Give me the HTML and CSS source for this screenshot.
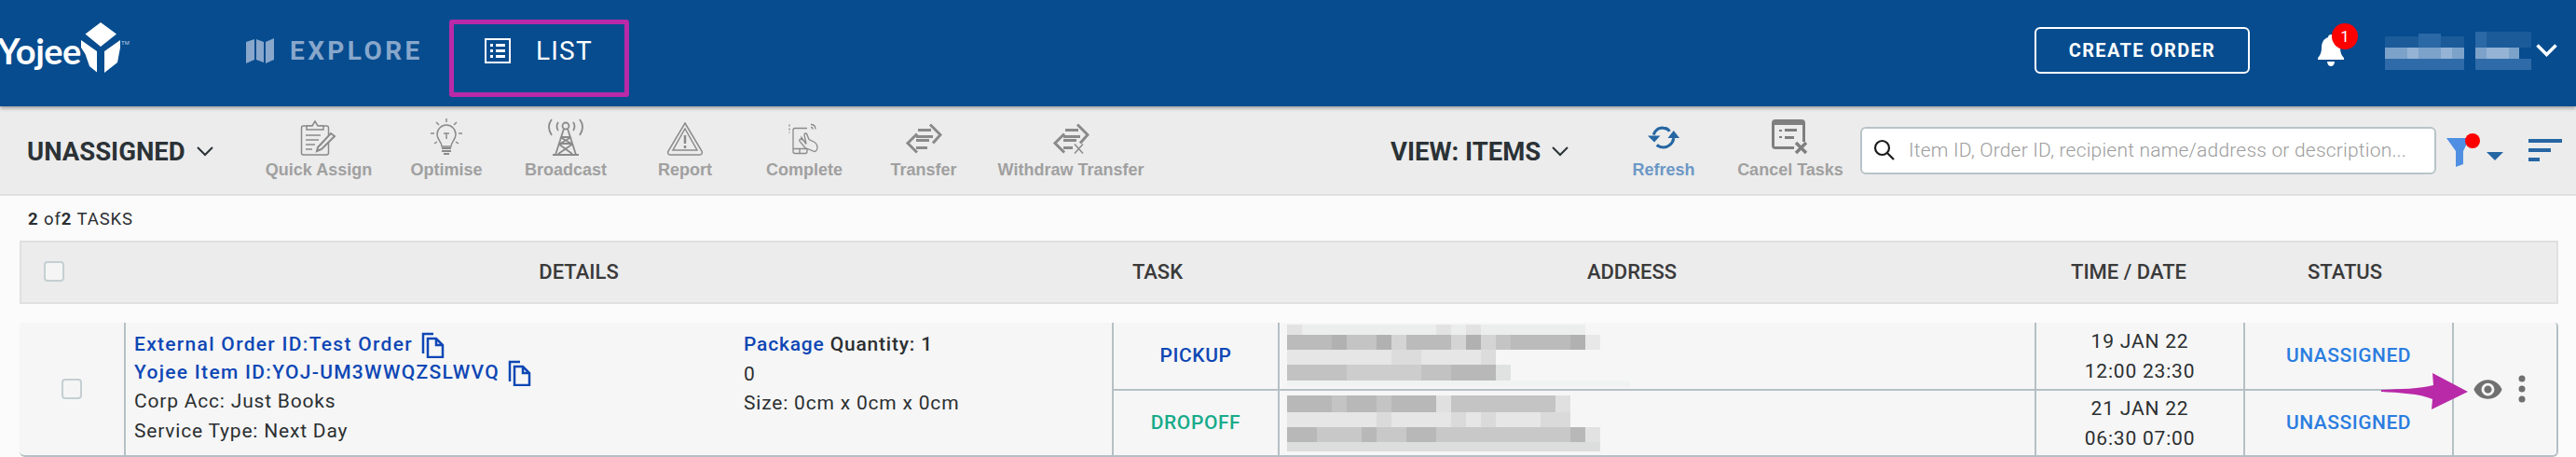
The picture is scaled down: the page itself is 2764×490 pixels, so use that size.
FILE: index.html
```html
<!DOCTYPE html>
<html lang="en">
  <head>
    <meta charset="UTF-8" />
    <meta name="viewport" content="width=device-width, initial-scale=1.0" />
    <title>Yojee - Task List</title>
    <link rel="stylesheet" href="styles.css">
  </head>
  <body>
    <header class="topbar">
      <div class="brand">
        <span class="brand-name">Yojee</span>
        <svg class="brand-mark" width="46" height="56" viewBox="0 0 46 56">
          <path fill="#fff" d="M21 0l17 12.500-17 13.500-16.500-13.500z" />
          <path fill="#fff" d="M0 19l17 12v22.500l-8-6.500-4.500-13L0 27z" />
          <path fill="#fff" d="M42 19L25 31v23l14-11 3-16z" />
          <text x="43" y="24" class="brand-tm">TM</text>
        </svg>
      </div>
      <nav class="main-nav">
        <a class="nav-link nav-link-muted">
          <svg width="30" height="27" viewBox="0 0 30 27">
            <path fill="#88a7cb" d="M0 4l9-3v22l-9 4zM11 1l8 3v22l-8-3zM21 4l9-4v23l-9 4z" />
          </svg>
          EXPLORE
        </a>
        <a class="nav-link nav-link-active">
          <svg width="28" height="27" viewBox="0 0 28 27">
            <rect x="1" y="1" width="26" height="25" fill="none" stroke="#fff" stroke-width="2" />
            <path fill="#fff" d="M6 6h3v3H6zM12 6h10v3H12zM6 12h3v3H6zM12 12h10v3H12zM6 18h3v3H6zM12 18h10v3H12z" />
          </svg>
          LIST
        </a>
      </nav>
      <button class="create-btn">CREATE ORDER</button>
      <div class="bell">
        <svg width="28" height="34" viewBox="0 0 28 34">
          <path fill="#fff" d="M14 0c2 0 3 1.500 3 3 5 1.500 7 6 7 11 0 6 2 9 4 11v2H0v-2c2-2 4-5 4-11 0-5 2-9.500 7-11 0-1.500 1-3 3-3z" />
          <path fill="#fff" d="M10 29h8c0 3-2 5-4 5s-4-2-4-5z" />
        </svg>
        <span class="bell-badge">1</span>
      </div>
      <svg class="user-blur" width="157" height="41" viewBox="0 0 157 41" shape-rendering="crispEdges">
        <path fill="#1c5b9a" d="M0 5h85v12H0zM97 0h60v17H97z" />
        <path fill="#2a68a6" d="M36 2h24v15H36zM97 0h12v17H97z" />
        <path fill="#7da2ca" d="M0 17h85v12H0zM97 17h47v12H97z" />
        <path fill="#94b3d5" d="M24 17h12v12H24zM60 17h12v12H60zM109 17h24v12h-24z" />
        <path fill="#2f6ba8" d="M0 29h85v12H0zM97 29h60v12H97z" />
      </svg>
      <svg class="user-chevron" width="23" height="14" viewBox="0 0 23 14">
        <path fill="none" stroke="#fff" stroke-width="3.500" d="M1.500 1.500l10 10 10-10" />
      </svg>
      <div class="list-highlight"></div>
    </header>

    <section class="toolbar">
      <div class="dropdown dropdown-status">
        UNASSIGNED
        <svg width="18" height="11" viewBox="0 0 18 11"><path fill="none" stroke="#2b3236" stroke-width="2" d="M1 1l8 8 8-8" /></svg>
      </div>

      <div class="tools">
        <div class="tool tool-wide">
          <svg width="40" height="40" viewBox="0 0 40 40" fill="none" stroke="#8a8a8a" stroke-width="1.500">
            <rect x="1.500" y="8" width="29" height="31" rx="2" />
            <path fill="#ececec" d="M7 12V8h6l3-5 3 5h6v4z" />
            <path d="M6 18h16M6 23h14M6 28h10M6 33h7" />
            <path fill="#ececec" stroke-width="2" d="M19 31L33 16l4 3-14 14-5 2z" />
          </svg>
          <span>Quick Assign</span>
        </div>
        <div class="tool">
          <svg width="34" height="40" viewBox="0 0 34 40" fill="none" stroke="#8a8a8a" stroke-width="1.500">
            <path d="M12 30c0-5-5-7-5-13a10 10 0 0 1 20 0c0 6-5 8-5 13z" />
            <path stroke-width="2" d="M12 32h10M12 35h10M14 38h6" />
            <path d="M17 0v4M6 4l3 3M28 4l-3 3M0 16h4M30 16h4M4 27l3-2M30 27l-3-2M14 16h6M17 16v6" />
          </svg>
          <span>Optimise</span>
        </div>
        <div class="tool">
          <svg width="42" height="40" viewBox="0 0 42 40" fill="none" stroke="#8a8a8a" stroke-width="1.800">
            <circle cx="21" cy="8" r="3.500" />
            <path d="M19 11L10 39M23 11l9 28M7 39h28M16 20h10M14 27h14M15 20l12 7M27 20l-12 7M13 27l15 11M29 27L13 38" />
            <path d="M13 4c-2 3-2 6 0 9M29 4c2 3 2 6 0 9M6 1c-4 5-4 11 0 17M36 1c4 5 4 11 0 17" />
          </svg>
          <span>Broadcast</span>
        </div>
        <div class="tool">
          <svg width="40" height="36" viewBox="0 0 40 36" fill="none" stroke="#8a8a8a" stroke-width="1.500" class="tool-icon-low">
            <path d="M20 1l18 30c1 2 0 4-2 4H4c-2 0-3-2-2-4z" />
            <path d="M20 7L33 30H7z" />
            <path stroke-width="2.500" d="M20 14v9M20 25v3" />
          </svg>
          <span>Report</span>
        </div>
        <div class="tool">
          <svg width="34" height="33" viewBox="0 0 34 33" fill="none" stroke="#8a8a8a" stroke-width="1.300" class="tool-icon-low">
            <path d="M20 24v6a2 2 0 0 1-2 2H7a2 2 0 0 1-2-2V7a2 2 0 0 1 2-2h13M5 27h15M12 27v5" />
            <path fill="#ececec" d="M14 15l5 7-2-10c0-2 3-2 3 0l2 5 6 3c3 2 4 6 2 9l-2 1-10-4-6-7c-1-2 1-3 2-2z" />
            <path stroke-dasharray="2 2" d="M1 1v9" />
            <path d="M24 1c3 0 5 2 5 5M24 4c1 0 2 1 2 2" />
          </svg>
          <span>Complete</span>
        </div>
        <div class="tool">
          <svg width="40" height="33" viewBox="0 0 40 33" fill="none" stroke="#8a8a8a" stroke-width="3" class="tool-icon-low">
            <path d="M27 1l11 11-8 9M14 7h14M12 14h18M13 11L3 21l10 10M12 18h14M12 26h12" />
          </svg>
          <span>Transfer</span>
        </div>
        <div class="tool tool-xwide">
          <svg width="40" height="33" viewBox="0 0 40 33" fill="none" stroke="#8a8a8a" stroke-width="3" class="tool-icon-low">
            <path d="M27 1l11 11-8 9M14 7h14M12 14h18M13 11L3 21l10 10M12 18h14M12 26h10" />
            <path stroke-width="1.500" d="M24 22l9 10M33 22l-9 10" />
          </svg>
          <span>Withdraw Transfer</span>
        </div>
      </div>

      <div class="dropdown dropdown-view">
        VIEW: ITEMS
        <svg width="18" height="11" viewBox="0 0 18 11"><path fill="none" stroke="#2b3236" stroke-width="2" d="M1 1l8 8 8-8" /></svg>
      </div>

      <div class="tool tool-refresh">
        <svg width="38" height="40" viewBox="0 0 38 40" class="tool-icon-low" fill="none" stroke="#2566a3" stroke-width="3.500">
          <path d="M7 15C9 9 14 6 19 7c3 0 6 2 7 4" />
          <path d="M31 19c-1 7-7 11-12 11-3 0-6-1-8-3" />
          <path fill="#2566a3" stroke="none" d="M0 16h15l-7 8zM24 19h14l-7-9z" />
        </svg>
        <span>Refresh</span>
      </div>
      <div class="tool tool-cancel">
        <svg width="40" height="38" viewBox="0 0 40 38">
          <path fill="#7f7f7f" d="M4 0h28a4 4 0 0 1 4 4v24a4 4 0 0 1-4 4H4a4 4 0 0 1-4-4V4a4 4 0 0 1 4-4z" />
          <rect x="3" y="6" width="30" height="23" fill="#ececec" />
          <path fill="#7f7f7f" d="M8 11h3v2H8zM14 10h13v3H14zM8 18h3v2H8zM14 18h10v3H14z" />
          <path fill="#ececec" d="M24 24h16v14H24z" />
          <path fill="none" stroke="#7f7f7f" stroke-width="3.500" d="M26 25l11 11M37 25L26 36" />
        </svg>
        <span>Cancel Tasks</span>
      </div>

      <div class="search-box">
        <svg width="24" height="24" viewBox="0 0 24 24" fill="none" stroke="#1b1b1b" stroke-width="2.200">
          <circle cx="9.500" cy="9.500" r="7.500" />
          <path d="M15 15l7 7" />
        </svg>
        <span class="search-placeholder">Item ID, Order ID, recipient name/address or description...</span>
      </div>

      <div class="filter">
        <svg width="38" height="36" viewBox="0 0 38 36">
          <path fill="#4f8fe3" d="M0 5h25l-7 14v14l-8 3V19z" />
          <circle cx="28" cy="8" r="8" fill="#f00" />
        </svg>
        <svg class="filter-caret" width="18" height="9" viewBox="0 0 18 9"><path fill="#2566a3" d="M0 0h18l-9 9z" /></svg>
      </div>
      <div class="sort-lines">
        <span class="sort-long"></span>
        <span class="sort-mid"></span>
        <span class="sort-short"></span>
      </div>
    </section>

    <main class="content">
      <div class="task-count"><b>2</b> of<b>2</b> TASKS</div>

      <div class="table-head">
        <div class="head-check"><span class="checkbox"></span></div>
        <div>DETAILS</div>
        <div>TASK</div>
        <div>ADDRESS</div>
        <div>TIME / DATE</div>
        <div>STATUS</div>
      </div>

      <div class="task-row">
        <div class="cell cell-check"><span class="checkbox"></span></div>

        <div class="cell cell-details">
          <div class="detail-col">
            <div class="detail-link">External Order ID:Test Order
              <svg width="25" height="28" viewBox="0 0 25 28" fill="none" stroke="#0e47b5" stroke-width="2.500"><path d="M2 23V2h11M7 7h9l7 7v13H7zM16 7v7h7" /></svg>
            </div>
            <div class="detail-link">Yojee Item ID:YOJ-UM3WWQZSLWVQ
              <svg width="25" height="28" viewBox="0 0 25 28" fill="none" stroke="#0e47b5" stroke-width="2.500"><path d="M2 23V2h11M7 7h9l7 7v13H7zM16 7v7h7" /></svg>
            </div>
            <div>Corp Acc: Just Books</div>
            <div>Service Type: Next Day</div>
          </div>
          <div class="detail-col detail-col-package">
            <div class="package-line"><span class="package-name">Package</span> Quantity: 1</div>
            <div>0</div>
            <div>Size: 0cm x 0cm x 0cm</div>
          </div>
        </div>

        <div class="cell cell-task task-pickup">PICKUP</div>
        <div class="cell cell-address">
          <svg width="376" height="70" viewBox="0 0 376 70" shape-rendering="crispEdges">
            <path fill="#eceeee" d="M8 2h320v11H8z" />
            <path fill="#e2e2e2" d="M8 2h16v11H8zM168 2h16v11h-16zM200 2h16v11h-16z" />
            <path fill="#bbb" d="M8 13h320v16H8z" />
            <path fill="#b1b1b1" d="M56 13h16v16H56zM104 13h16v16h-16zM200 13h16v16h-16zM312 13h16v16h-16z" />
            <path fill="#c4c4c4" d="M72 13h32v16H72zM232 13h16v16h-16z" />
            <path fill="#d4d4d4" d="M120 13h16v16h-16zM184 13h16v16h-16zM216 13h16v16h-16z" />
            <path fill="#e8e8e8" d="M328 13h16v16h-16z" />
            <path fill="#e6e6e6" d="M8 29h224v16H8z" />
            <path fill="#dcdcdc" d="M120 29h32v16h-32zM216 29h16v16h-16z" />
            <path fill="#c2c2c2" d="M8 45h64v17H8zM152 45h32v17h-32z" />
            <path fill="#cdcdcd" d="M72 45h80v17H72z" />
            <path fill="#b8b8b8" d="M184 45h48v17h-48z" />
            <path fill="#e0e2e2" d="M232 45h16v17h-16z" />
            <path fill="#f1f3f3" d="M8 62h368v7H8z" />
          </svg>
        </div>
        <div class="cell cell-time">
          <div>19 JAN 22</div>
          <div>12:00 23:30</div>
        </div>
        <div class="cell cell-status">UNASSIGNED</div>

        <div class="cell cell-actions">
          <svg width="33" height="33" viewBox="0 0 24 24"><path fill="#707070" d="M12 4.500C7 4.500 2.730 7.610 1 12c1.730 4.390 6 7.500 11 7.500s9.270-3.110 11-7.500c-1.730-4.390-6-7.500-11-7.500zM12 17c-2.760 0-5-2.240-5-5s2.240-5 5-5 5 2.240 5 5-2.240 5-5 5zm0-8c-1.660 0-3 1.340-3 3s1.340 3 3 3 3-1.340 3-3-1.340-3-3-3z" /></svg>
          <svg width="8" height="30" viewBox="0 0 8 30" fill="#707070"><circle cx="4" cy="4" r="3.500" /><circle cx="4" cy="15" r="3.500" /><circle cx="4" cy="26" r="3.500" /></svg>
        </div>

        <div class="cell cell-task task-dropoff cell-lower">DROPOFF</div>
        <div class="cell cell-address cell-lower">
          <svg width="376" height="70" viewBox="0 0 376 70" shape-rendering="crispEdges">
            <path fill="#b8b8b8" d="M8 5h48v18H8zM72 5h32v18H72zM120 5h48v18h-48z" />
            <path fill="#c4c4c4" d="M56 5h16v18H56zM104 5h16v18h-16zM184 5h112v18H184z" />
            <path fill="#e0e0e0" d="M168 5h16v18h-16zM296 5h16v18h-16z" />
            <path fill="#e6e6e6" d="M8 23h304v16H8z" />
            <path fill="#dadada" d="M104 23h16v16h-16zM184 23h16v16h-16zM216 23h16v16h-16zM280 23h32v16h-32z" />
            <path fill="#c8c8c8" d="M8 39h320v16H8z" />
            <path fill="#b8b8b8" d="M8 39h32v16H8zM88 39h16v16H88zM136 39h32v16h-32zM312 39h16v16h-16z" />
            <path fill="#e2e2e2" d="M328 39h16v16h-16z" />
            <path fill="#dcdddd" d="M8 55h336v10H8z" />
          </svg>
        </div>
        <div class="cell cell-time cell-lower">
          <div>21 JAN 22</div>
          <div>06:30 07:00</div>
        </div>
        <div class="cell cell-status cell-lower">UNASSIGNED</div>

        <svg class="pointer-arrow" width="95" height="40" viewBox="0 0 95 40">
          <path fill="#b92aa8" d="M0 18c20-1 42-1 56-5L55 0l38 20-39 19 1-11c-14-6-36-7-55-8z" />
        </svg>
      </div>
    </main>
  </body>
</html>
```
FILE: styles.css
```css
html,
body {
  margin: 0;
  padding: 0;
  height: 490px;
  overflow: hidden;
  background-color: #fbfbfb;
  font-family: Roboto, Arial, sans-serif;
  color: #2b2f31;
}
svg {
  display: block;
  flex: none;
}

/* top bar */
.topbar {
  position: relative;
  z-index: 2;
  display: flex;
  align-items: center;
  box-sizing: border-box;
  height: 114px;
  padding: 0 20px 6px 0;
  background-color: #064c8f;
  box-shadow: 0 2px 4px rgba(0, 0, 0, 0.35);
}
.brand {
  display: flex;
  align-items: flex-start;
  align-self: flex-start;
  width: 264px;
  height: 56px;
  margin-top: 24px;
}
.brand-name {
  margin-left: -3px;
  width: 90px;
  font-family: Lato, sans-serif;
  font-size: 38px;
  line-height: 60px;
  font-weight: 700;
  letter-spacing: -0.5px;
  color: #fff;
}
.brand-mark {
  overflow: visible;
}
.brand-tm {
  font-family: "Liberation Sans", sans-serif;
  font-size: 6px;
  fill: #c5d5e6;
}
.main-nav {
  display: flex;
  align-items: center;
}
.nav-link {
  display: flex;
  align-items: center;
  font-size: 28px;
  letter-spacing: 1.2px;
}
.nav-link-muted {
  gap: 17px;
  width: 256px;
  font-weight: 700;
  letter-spacing: 3.4px;
  color: #88a7cb;
}
.nav-link-active {
  gap: 27px;
  color: #fff;
}
.create-btn {
  margin-left: auto;
  box-sizing: border-box;
  width: 231px;
  height: 50px;
  border: 2px solid #fff;
  border-radius: 6px;
  background: none;
  font-family: Roboto, Arial, sans-serif;
  font-size: 20px;
  font-weight: 700;
  letter-spacing: 1.3px;
  color: #fff;
}
.bell {
  position: relative;
  margin-left: 73px;
}
.bell-badge {
  position: absolute;
  top: -12px;
  left: 15px;
  width: 28px;
  height: 28px;
  border-radius: 50%;
  background-color: #f00;
  font-size: 17px;
  line-height: 28px;
  text-align: center;
  color: #fff;
}
.user-blur {
  margin-left: 44px;
}
.user-chevron {
  margin-left: 5px;
}
.list-highlight {
  position: absolute;
  left: 482px;
  top: 21px;
  width: 193px;
  height: 83px;
  box-sizing: border-box;
  border: 5px solid #b92aa8;
  border-radius: 3px;
}

/* toolbar */
.toolbar {
  display: flex;
  align-items: center;
  box-sizing: border-box;
  height: 96px;
  padding-left: 29px;
  background-color: #ececec;
  border-bottom: 2px solid #e0e0e0;
}
.dropdown {
  display: flex;
  align-items: center;
  gap: 12px;
  padding-top: 3px;
  font-size: 27.500px;
  font-weight: 700;
  color: #2b3236;
}
.dropdown-status {
  width: 240px;
}
.dropdown-view {
  margin-left: 249px;
  width: 229px;
}
.tools {
  display: flex;
  align-self: stretch;
}
.tool {
  display: flex;
  flex-direction: column;
  align-items: center;
  align-self: stretch;
  box-sizing: border-box;
  width: 128px;
  padding-top: 13px;
  font-family: "Liberation Sans", Arial, sans-serif;
  font-size: 18px;
  font-weight: 700;
  line-height: 20px;
  color: #a0a0a0;
}
.tool svg {
  height: 40px;
  margin-bottom: 5px;
}
.tool svg.tool-icon-low {
  height: 36px;
  margin-top: 4px;
  margin-bottom: 5px;
}
.tool-wide {
  width: 146px;
}
.tool-xwide {
  width: 188px;
}
.tool-refresh {
  color: #6c98c6;
}
.tool-cancel {
  width: 144px;
}
.search-box {
  display: flex;
  align-items: center;
  gap: 14px;
  box-sizing: border-box;
  width: 618px;
  height: 51px;
  margin-left: 3px;
  padding-left: 12px;
  border: 2px solid #b8c4c8;
  border-radius: 6px;
  background-color: #fff;
}
.search-placeholder {
  font-size: 21px;
  font-weight: 300;
  letter-spacing: 0.2px;
  color: #9c9c9c;
}
.filter {
  display: flex;
  align-items: center;
  margin-left: 11px;
}
.filter-caret {
  margin: 12px 0 0 5px;
}
.sort-lines {
  display: flex;
  flex-direction: column;
  gap: 6px;
  margin-left: 27px;
}
.sort-lines span {
  display: block;
  height: 4px;
  background-color: #2566a3;
}
.sort-long {
  width: 36px;
}
.sort-mid {
  width: 24px;
}
.sort-short {
  width: 12px;
}

/* task table */
.content {
  padding: 13px 19px 0 21px;
}
.task-count {
  height: 35px;
  padding-left: 9px;
  font-size: 18.500px;
  letter-spacing: 0.9px;
  line-height: 24px;
}
.task-count b {
  font-weight: 700;
}
.table-head {
  display: grid;
  grid-template-columns: 87px 1022px 220px 798px 268px 196px 1fr;
  align-items: center;
  box-sizing: border-box;
  height: 68px;
  padding-bottom: 2px;
  border: 2px solid #e0e0e0;
  background-color: #ececec;
  font-size: 22px;
  font-weight: 500;
  text-align: center;
  color: #3a3a3a;
}
.head-check {
  padding-left: 24px;
  text-align: left;
}
.checkbox {
  display: block;
  box-sizing: border-box;
  width: 22px;
  height: 22px;
  border: 2px solid #c5cfd3;
  border-radius: 4px;
  background-color: #f5f5f5;
}
.task-row {
  position: relative;
  display: grid;
  grid-template-columns: 112px 1060px 178px 812px 224px 224px 1fr;
  grid-template-rows: 71px 71px;
  box-sizing: border-box;
  height: 144px;
  margin-top: 20px;
  background-color: #f6f6f6;
  border-right: 2px solid #b5c0c5;
  border-bottom: 2px solid #b5c0c5;
  border-radius: 4px 4px 6px 6px;
  font-size: 21px;
  letter-spacing: 0.8px;
  color: #2b2f31;
}
.cell {
  box-sizing: border-box;
  border-left: 2px solid #b5c0c5;
}
.cell-lower {
  grid-column-start: auto;
  border-top: 2px solid #b5c0c5;
}
.cell-check {
  grid-row: 1 / 3;
  display: flex;
  align-items: center;
  justify-content: center;
  padding-left: 0;
  border-left: 0;
}
.cell-details {
  grid-row: 1 / 3;
  display: grid;
  grid-template-columns: 654px 1fr;
  padding: 9px 0 0 9px;
  line-height: 31.500px;
}
.detail-link {
  display: flex;
  align-items: center;
  gap: 9px;
  height: 30px;
  font-weight: 500;
  letter-spacing: 1.300px;
  color: #0e47b5;
}
.detail-col-package {
  margin-top: -1px;
}
.package-line {
  font-weight: 500;
}
.package-name {
  color: #0e47b5;
}
.cell-task {
  display: flex;
  align-items: center;
  justify-content: center;
  padding-bottom: 2px;
  font-weight: 500;
  letter-spacing: 0.6px;
}
.cell-lower.cell-task {
  grid-column: 3;
}
.task-pickup {
  color: #0e47b5;
}
.task-dropoff {
  color: #18ab8a;
}
.cell-time {
  display: flex;
  flex-direction: column;
  justify-content: center;
  line-height: 32px;
  text-align: center;
}
.cell-status {
  display: flex;
  align-items: center;
  justify-content: center;
  padding-bottom: 2px;
  font-weight: 500;
  letter-spacing: 0.5px;
  color: #2b7de0;
}
.cell-actions {
  grid-column: 7;
  grid-row: 1 / 3;
  display: flex;
  align-items: center;
  gap: 16px;
  padding-left: 20px;
}
.pointer-arrow {
  position: absolute;
  left: 2534px;
  top: 54px;
}
```
